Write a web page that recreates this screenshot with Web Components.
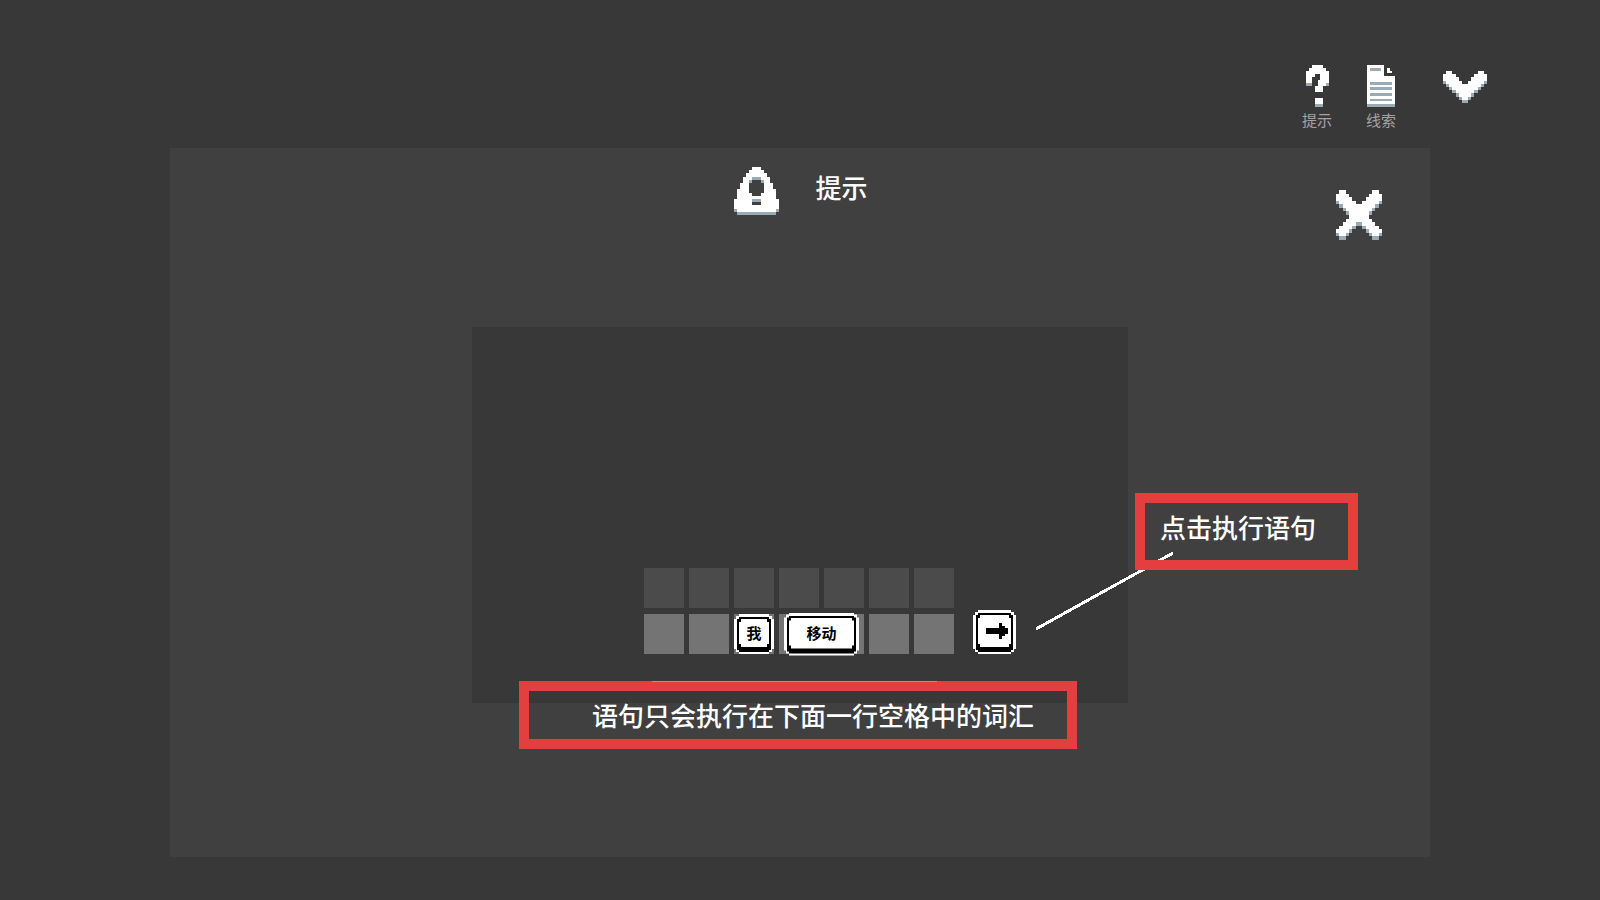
<!DOCTYPE html>
<html lang="zh-CN">
<head>
<meta charset="utf-8">
<meta name="viewport" content="width=device-width, initial-scale=1">
<title>提示</title>
<style>
    body {
        margin: 0;
        min-height: 100vh;
        background: #383838;
        color: #fff;
        font-family: "Noto Sans CJK SC", sans-serif;
    }
</style>
</head>
<body>
<game-screen></game-screen>

<script>
// w = white pixels, g = grey shade, . = empty
const SPRITES = {
    question: [
        "..wwww..",
        ".wwwwww.",
        "wwwwwwww",
        "www..www",
        "ww...www",
        "ww..wwww",
        "gg..wwwg",
        "...www..",
        "...www..",
        "........",
        "........",
        "...www..",
        "...www..",
        "...ggg.."
    ],
    arrow: [
        ".ww........ww.",
        "wwww......wwww",
        "wwwww....wwwww",
        "gwwwww..wwwwwg",
        ".gwwwwwwwwwwg.",
        "..gwwwwwwwwg..",
        "...gwwwwwwg...",
        "....gwwwwg....",
        ".....gwwg.....",
        "......gg......"
    ],
    warning: [
        "......www......",
        ".....wwwww.....",
        "....wwwwwww....",
        "...wwwgggwww...",
        "...wwg...gww...",
        "..www.....www..",
        "..www.....www..",
        ".wwww.....wwww.",
        ".wwwww...wwwww.",
        ".wwwwwwwwwwwww.",
        "wwwwwwgggwwwwww",
        "wwwwww...wwwwww",
        "wwwwwwwwwwwwwww",
        "gwwwwwwwwwwwwwg",
        ".ggggggggggggg."
    ],
    close: [
        ".ww........ww.",
        "wwww......wwww",
        "wwwww....wwwww",
        "gwwwww..wwwwwg",
        ".gwwwwwwwwwwg.",
        "..gwwwwwwwwg..",
        "...gwwwwwwg...",
        "....wwwwww....",
        "...wwwwwwww...",
        "..wwwwggwwww..",
        ".wwwwg..gwwww.",
        "wwwwg....gwwww",
        "gwwg......gwwg",
        ".gg........gg."
    ]
};
const COLORS = { w: "#fff", g: "#9aabb5" };

class PixelIcon extends HTMLElement {
    constructor() {
        super();
        this.shadowDOM = this.attachShadow({ mode: "open" });
    }

    connectedCallback() {
        this.render();
    }

    render() {
        const rows = SPRITES[this.getAttribute("name")];
        let rects = "";
        rows.forEach((row, y) => {
            [...row].forEach((c, x) => {
                if (COLORS[c]) {
                    rects += `<rect x="${x}" y="${y}" width="1" height="1" fill="${COLORS[c]}"/>`;
                }
            });
        });
        this.shadowDOM.innerHTML = `
        <style>
            :host {
                display: block;
            }

            svg {
                display: block;
                width: 100%;
                height: 100%;
            }
        </style>
        <svg viewBox="0 0 ${rows[0].length} ${rows.length}" preserveAspectRatio="none" shape-rendering="crispEdges" aria-hidden="true">${rects}</svg>
        `;
    }
}

class GameToolbar extends HTMLElement {
    constructor() {
        super();
        this.shadowDOM = this.attachShadow({ mode: "open" });
    }

    connectedCallback() {
        this.render();
    }

    render() {
        this.shadowDOM.innerHTML = `
        <style>
            :host {
                display: flex;
                justify-content: flex-end;
                align-items: flex-start;
                padding: 65px 113px 0 0;
            }

            button {
                display: flex;
                flex-direction: column;
                align-items: center;
                gap: 3px;
                width: 64px;
                padding: 0;
                border: 0;
                background: none;
                color: #a3a3a3;
                font-family: inherit;
                font-size: 15px;
                line-height: 20px;
                cursor: pointer;
            }

            .more {
                width: 44px;
                margin-left: 30px;
                padding-top: 6px;
            }

            .question {
                width: 23px;
                height: 42px;
            }

            svg {
                width: 28px;
                height: 42px;
            }

            .arrow {
                width: 44px;
                height: 32px;
            }
        </style>
        <button type="button"><pixel-icon class="question" name="question"></pixel-icon>提示</button>
        <button type="button">
            <svg viewBox="0 0 28 42" shape-rendering="crispEdges" aria-hidden="true">
                <path fill="#fff" d="M0 0H17V11H28V39H0z"/>
                <path fill="#fff" d="M20 3H23V6H25V8H20z"/>
                <path fill="#9aabb5" d="M3 3H14V6H3zM3 17H25V20H3zM3 22H25V25H3zM3 28H25V31H3zM3 34H25V36H3zM0 39H28V42H0z"/>
            </svg>线索</button>
        <button type="button" class="more" aria-label="收起"><pixel-icon class="arrow" name="arrow"></pixel-icon></button>
        `;
    }
}

class WordTile extends HTMLElement {
    constructor() {
        super();
        this.shadowDOM = this.attachShadow({ mode: "open" });
    }

    connectedCallback() {
        this.render();
    }

    render() {
        this.shadowDOM.innerHTML = `
        <style>
            :host {
                display: block;
            }

            button {
                display: block;
                box-sizing: border-box;
                width: 100%;
                height: 100%;
                padding: 3px 3px 2px;
                border: 0;
                background: #fff;
                clip-path: polygon(5px 0, calc(100% - 5px) 0, calc(100% - 5px) 2px, calc(100% - 2px) 2px, calc(100% - 2px) 5px, 100% 5px, 100% calc(100% - 5px), calc(100% - 2px) calc(100% - 5px), calc(100% - 2px) calc(100% - 2px), calc(100% - 5px) calc(100% - 2px), calc(100% - 5px) 100%, 5px 100%, 5px calc(100% - 2px), 2px calc(100% - 2px), 2px calc(100% - 5px), 0 calc(100% - 5px), 0 5px, 2px 5px, 2px 2px, 5px 2px);
                color: #000;
                font-family: inherit;
                font-size: 15px;
                font-weight: 700;
                cursor: pointer;
            }

            /* black ring, corners cut so the white edge shows through */
            .rim {
                display: block;
                box-sizing: border-box;
                height: 100%;
                background: #000;
                padding: 2px 2px 5px;
                clip-path: polygon(2px 0, calc(100% - 2px) 0, calc(100% - 2px) 2px, 100% 2px, 100% calc(100% - 2px), calc(100% - 2px) calc(100% - 2px), calc(100% - 2px) 100%, 2px 100%, 2px calc(100% - 2px), 0 calc(100% - 2px), 0 2px, 2px 2px);
            }

            .face {
                display: flex;
                align-items: center;
                justify-content: center;
                height: 100%;
                background: #fff;
                clip-path: polygon(2px 0, calc(100% - 2px) 0, calc(100% - 2px) 3px, 100% 3px, 100% calc(100% - 3px), calc(100% - 2px) calc(100% - 3px), calc(100% - 2px) 100%, 2px 100%, 2px calc(100% - 3px), 0 calc(100% - 3px), 0 3px, 2px 3px);
                line-height: 24px;
            }
        </style>
        <button type="button" aria-label="${this.getAttribute("label") || this.textContent}"><span class="rim"><span class="face"><slot></slot></span></span></button>
        `;
    }
}

class WordSlots extends HTMLElement {
    constructor() {
        super();
        this.shadowDOM = this.attachShadow({ mode: "open" });
    }

    connectedCallback() {
        this.render();
    }

    render() {
        this.shadowDOM.innerHTML = `
        <style>
            :host {
                display: flex;
                align-items: flex-end;
                gap: 19px;
            }

            .grid {
                display: grid;
                grid-template-columns: repeat(7, 40px);
                grid-template-rows: 40px 40px;
                gap: 6px 5px;
            }

            .cell {
                background: #4b4b4b;
            }

            .active {
                background: #747474;
                grid-row: 2;
            }

            .me {
                grid-area: 2 / 3;
            }

            .move {
                grid-area: 2 / 4 / 3 / 6;
                justify-self: center;
                align-self: center;
                width: 75px;
                height: 43px;
            }

            .run {
                width: 43px;
                height: 44px;
            }

            svg {
                display: block;
                width: 22px;
                height: 16px;
                margin-left: 5px;
            }
        </style>
        <div class="grid">
            ${'<span class="cell"></span>'.repeat(7)}
            ${[1, 2, 3, 4, 5, 6, 7].map(n => `<span class="cell active" style="grid-column: ${n}"></span>`).join("")}
            <word-tile class="me">我</word-tile>
            <word-tile class="move">移动</word-tile>
        </div>
        <word-tile class="run" label="执行">
            <svg viewBox="0 0 22 16" shape-rendering="crispEdges" aria-hidden="true">
                <path d="M0 5H13V0H16V3H19V5H22V11H19V13H16V16H13V11H0z"/>
            </svg>
        </word-tile>
        `;
    }
}

class RedNote extends HTMLElement {
    constructor() {
        super();
        this.shadowDOM = this.attachShadow({ mode: "open" });
    }

    connectedCallback() {
        this.render();
    }

    render() {
        this.shadowDOM.innerHTML = `
        <style>
            :host {
                display: block;
                box-sizing: border-box;
                border: 10px solid #e43e3e;
                font-size: 26px;
                font-weight: 500;
                line-height: 36px;
                white-space: nowrap;
            }

            p {
                margin: 0;
            }
        </style>
        <p><slot></slot></p>
        `;
    }
}

class HintPanel extends HTMLElement {
    constructor() {
        super();
        this.shadowDOM = this.attachShadow({ mode: "open" });
    }

    connectedCallback() {
        this.render();
    }

    render() {
        this.shadowDOM.innerHTML = `
        <style>
            :host {
                display: block;
                box-sizing: border-box;
                flex: 1;
                background: #404040;
            }

            header {
                display: grid;
                grid-template-columns: 1fr auto 1fr;
                align-items: start;
                height: 179px;
                box-sizing: border-box;
                padding: 19px 48px 0 50px;
            }

            h1 {
                grid-column: 2;
                display: flex;
                gap: 36px;
                margin: 0;
                font-size: 26px;
                font-weight: 500;
                line-height: 40px;
            }

            .warning {
                width: 45px;
                height: 48px;
            }

            .close {
                justify-self: end;
                width: 46px;
                margin-top: 23px;
                padding: 0;
                border: 0;
                background: none;
                cursor: pointer;
            }

            .close pixel-icon {
                height: 50px;
            }

            .stage {
                position: relative;
                box-sizing: border-box;
                width: 656px;
                height: 376px;
                margin: 0 auto;
                padding: 241px 0 0 172px;
                background: #383838;
            }

            /* callouts lie over the stage */
            .line {
                position: absolute;
                left: 562px;
                top: 223px;
                width: 142px;
                height: 82px;
            }

            .rule {
                position: absolute;
                left: 180px;
                top: 354px;
                width: 285px;
                height: 1px;
                background: rgba(255, 255, 255, 0.3);
            }

            .run-note {
                position: absolute;
                left: 663px;
                top: 166px;
                padding: 6px 32px 15px 15px;
            }

            .row-note {
                position: absolute;
                left: 47px;
                top: 354px;
                padding: 6px 33px 6px 63px;
            }
        </style>
        <header>
            <h1><pixel-icon class="warning" name="warning"></pixel-icon>提示</h1>
            <button class="close" type="button" aria-label="关闭"><pixel-icon name="close"></pixel-icon></button>
        </header>
        <div class="stage">
            <word-slots></word-slots>
            <svg class="line" viewBox="0 0 142 82" shape-rendering="crispEdges" aria-hidden="true"><path d="M2 79L139 3" stroke="#fff" stroke-width="3"/></svg>
            <red-note class="run-note">点击执行语句</red-note>
            <red-note class="row-note">语句只会执行在下面一行空格中的词汇</red-note>
            <div class="rule"></div>
        </div>
        `;
    }
}

class GameScreen extends HTMLElement {
    constructor() {
        super();
        this.shadowDOM = this.attachShadow({ mode: "open" });
    }

    connectedCallback() {
        this.render();
    }

    render() {
        this.shadowDOM.innerHTML = `
        <style>
            :host {
                display: flex;
                flex-direction: column;
                box-sizing: border-box;
                min-height: 100vh;
                padding-bottom: 43px;
            }

            game-toolbar {
                box-sizing: border-box;
                height: 148px;
            }

            hint-panel {
                margin: 0 170px;
            }
        </style>
        <game-toolbar></game-toolbar>
        <hint-panel></hint-panel>
        `;
    }
}

customElements.define("pixel-icon", PixelIcon);
customElements.define("game-toolbar", GameToolbar);
customElements.define("word-tile", WordTile);
customElements.define("word-slots", WordSlots);
customElements.define("red-note", RedNote);
customElements.define("hint-panel", HintPanel);
customElements.define("game-screen", GameScreen);
</script>
</body>
</html>
